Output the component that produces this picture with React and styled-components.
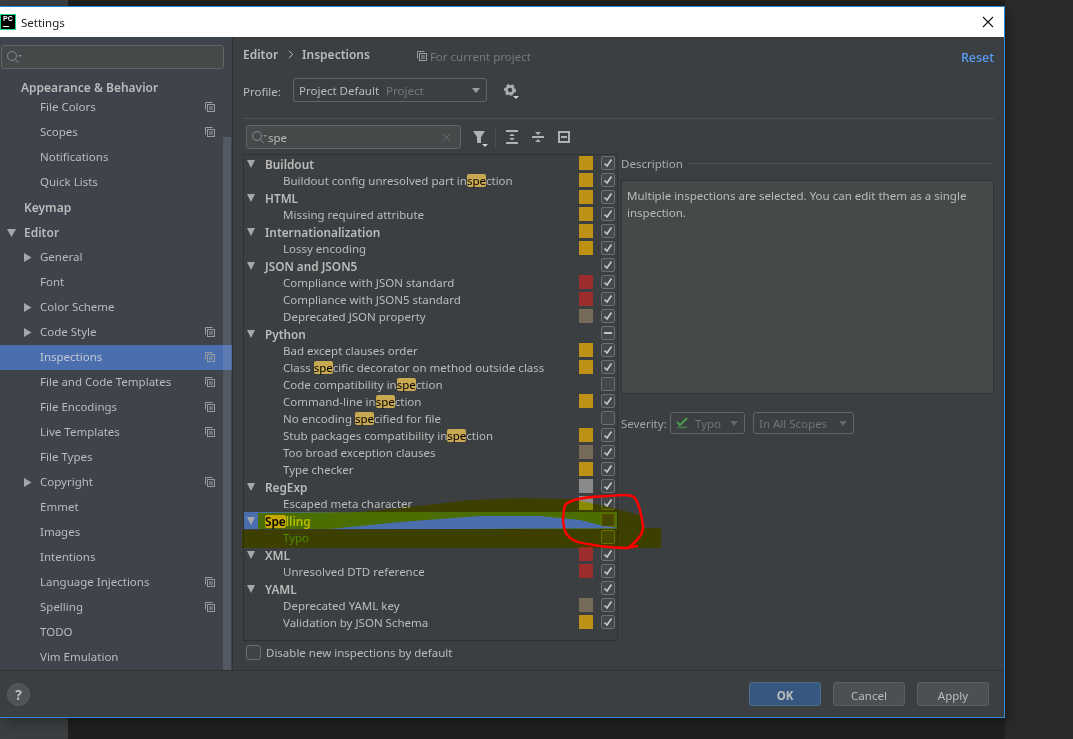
import React from 'react';
import styled, { createGlobalStyle } from 'styled-components';

const Global = createGlobalStyle`
  html, body { margin: 0; padding: 0; height: 739px; overflow: hidden; background: #2a2a2a; }
  * { box-sizing: border-box; }
  body { font-family: "Noto Sans", "Liberation Sans", sans-serif; font-size: 11.5px; color: #bbb; }
`;

const Page = styled.div`
  position: relative; width: 1073px; height: 739px; padding-top: 6px; overflow: hidden;
  background: linear-gradient(90deg, #3c3f41 0 68px, #202020 68px 1005px, #2b2b2b 1005px);
`;
const Win = styled.div`
  width: 1005px; height: 712px; display: flex; flex-direction: column;
  border-top: 1px solid #2f86d6; border-right: 1px solid #2f86d6; border-bottom: 1px solid #2f86d6;
  background: #3c3f41; box-shadow: 4px 4px 14px rgba(0,0,0,.35);
`;
const TitleBar = styled.div`
  height: 30px; flex: none; background: #fff; display: flex; align-items: center; padding: 0 8px 0 0;
  color: #222; font-size: 11.5px;
`;
const Logo = styled.div`
  width: 16px; height: 16px; margin: 0 5px 0 0; background: #000; border: 1px solid #21d789;
  color: #fff; font: 700 7px/8px "Liberation Sans", sans-serif; padding: 0 0 0 2px; position: relative;
  &::after { content: ""; position: absolute; left: 2px; bottom: 2px; width: 6px; height: 1px; background: #fff; }
`;
const TitleText = styled.span` flex: 1; `;
const Body = styled.div` flex: 1; min-height: 0; display: flex; `;
const Sidebar = styled.div`
  width: 233px; flex: none; background: #3e434c; border-right: 1px solid #323232; position: relative; overflow: hidden;
  padding-top: 8px;
`;
const SideSearch = styled.div`
  width: 223px; height: 24px; margin-left: 1px; background: #45494a; border: 1px solid #646464; border-radius: 3px;
  display: flex; align-items: center; padding-left: 4px;
`;
const SideList = styled.div` margin-top: 6px; `;
const SideRow = styled.div`
  height: ${p => (p.$short ? 20 : 25)}px; display: flex; align-items: center;
  padding-right: 17px; padding-top: ${p => (p.$short ? 4 : 0)}px;
  background: ${p => (p.$active ? '#4b6eaf' : 'transparent')};
  font-weight: ${p => (p.$bold ? 600 : 400)}; font-size: ${p => (p.$bold ? 12 : 11.5)}px;
  color: ${p => (p.$active ? '#c4cad4' : '#bbb')};
`;
const SideSlot = styled.div`
  width: ${p => p.$w}px; flex: none; display: flex; justify-content: flex-end; padding-right: 8px;
`;
const SideLabel = styled.span` flex: 1; white-space: nowrap; padding-bottom: ${p => (p.$bold ? 0 : 2)}px; `;
const Scrollbar = styled.div`
  position: absolute; left: 223px; top: 100px; width: 8px; height: 533px; background: rgba(160,170,180,.22);
`;
const Content = styled.div` flex: 1; min-width: 0; padding: 0 10px; display: flex; flex-direction: column; `;
const Header = styled.div` height: 35px; display: flex; align-items: center; `;
const Crumb = styled.span` font-weight: 600; font-size: 12px; `;
const CrumbSep = styled.span` margin: 0 8px 0 10px; display: flex; `;
const ForProject = styled.span`
  margin-left: 47px; margin-top: 4px; color: #787878; display: flex; align-items: center; gap: 3px;
`;
const Reset = styled.span` margin-left: auto; margin-top: 6px; color: #589df6; font-weight: 500; font-size: 12.5px; `;
const ProfileRow = styled.div` margin-top: 6px; height: 24px; display: flex; align-items: center; `;
const ProfileLabel = styled.span` width: 50px; flex: none; margin-top: 2px; `;
const Combo = styled.div`
  height: ${p => p.$h || 24}px; width: ${p => p.$w}px; flex: none; display: flex; align-items: center;
  border: 1px solid #646464; border-radius: 3px; padding: 0 ${p => p.$pr || 6}px 0 ${p => p.$pl || 5}px;
  color: ${p => (p.$dim ? '#707476' : '#bbb')};
`;
const ComboHint = styled.span` color: #787878; margin-left: 7px; `;
const Arrow = styled.span`
  margin-left: auto; width: 0; height: 0; border-left: 4.5px solid transparent; border-right: 4.5px solid transparent;
  border-top: 5px solid ${p => (p.$dim ? '#666' : '#9a9da0')};
`;
const GearWrap = styled.span` margin-left: 17px; margin-top: 2px; display: flex; `;
const Divider = styled.div` height: 1px; background: #515151; margin-top: 16px; `;
const Toolbar = styled.div` margin-top: 6px; height: 24px; padding-left: 3px; display: flex; align-items: center; `;
const SearchBox = styled.div`
  width: 215px; height: 24px; background: #45494a; border: 1px solid #646464; border-radius: 3px;
  display: flex; align-items: center; padding: 0 9px 0 4px; gap: 1px;
`;
const SearchText = styled.span` flex: 1; color: #bbb; margin-top: 1px; `;
const ToolIcon = styled.span` display: flex; margin-left: ${p => p.$ml}px; `;
const ToolSep = styled.span` width: 1px; height: 20px; background: #515151; margin-left: 6px; `;
const Main = styled.div` margin-top: 5px; display: flex; gap: 3px; height: 487px; `;
const Tree = styled.div` width: 375px; flex: none; border: 1px solid #2f3132; padding-right: 2px; `;
const TreeRow = styled.div`
  height: 17px; display: flex; align-items: center; padding-left: ${p => (p.$group ? 3 : 39)}px;
  background: ${p => (p.$active ? '#4b6eaf' : 'transparent')}; margin-right: ${p => (p.$active ? '-2px' : '0')};
  padding-right: ${p => (p.$active ? '2px' : '0')};
`;
const TreeCaret = styled.span`
  width: 0; height: 0; flex: none; margin-right: 10px; border-left: 4.5px solid transparent; border-right: 4.5px solid transparent;
  border-top: 8px solid #a5a8aa;
`;
const TreeLabel = styled.span`
  flex: 1; white-space: nowrap; line-height: 13px; padding-top: ${p => (p.$group ? 2 : 0)}px; font-weight: ${p => (p.$group ? 600 : 400)};
  font-size: ${p => (p.$group ? 11.8 : 11.5)}px;
  color: ${p => p.$color || '#bbb'};
`;
const Mark = styled.mark`
  display: inline-block; height: 13px; line-height: 13px; background: #c8a850; color: #000; border-radius: 2px;
`;
const Swatch = styled.span`
  width: 14px; height: 14px; flex: none; margin: -1px 8px 0 0; background: ${p => p.$c || 'transparent'};
`;
const Box = styled.span`
  width: 14px; height: 14px; flex: none; margin-top: -1px; background: #43494a; border: 1px solid #6e6e6e; border-radius: 2px;
  display: flex; align-items: center; justify-content: center;
`;
const Details = styled.div` flex: 1; min-width: 0; display: flex; flex-direction: column; `;
const DescHead = styled.div` height: 20px; padding-bottom: 2px; display: flex; align-items: center; gap: 6px; color: #a9abad; padding-right: 3px; `;
const DescLine = styled.span` flex: 1; height: 1px; background: #515151; `;
const DescBox = styled.div`
  margin-top: 6px; height: 214px; background: #45494a; border: 1px solid #323232; padding: 6px 5px;
  line-height: 17px; color: #bbb;
`;
const Severity = styled.div` margin-top: 18px; height: 22px; display: flex; align-items: center; `;
const SevLabel = styled.span` width: 49px; flex: none; color: #a2a4a6; `;
const DisableRow = styled.div` margin-top: 3px; padding-left: 3px; height: 16px; display: flex; align-items: center; gap: 5px; `;
const BigBox = styled(Box)` width: 15px; height: 15px; margin-top: 0; border-radius: 3px; background: #3f4345; `;
const Footer = styled.div`
  height: 47px; flex: none; border-top: 1px solid #323232; display: flex; align-items: center;
  padding: 0 15px 0 7px;
`;
const Help = styled.div`
  width: 23px; height: 23px; border-radius: 50%; background: #505355; border: 1px solid #5c5f61; color: #bbb;
  font-weight: 700; font-size: 14px; display: flex; align-items: center; justify-content: center; margin-right: auto;
`;
const Btn = styled.div`
  width: 72px; height: 24px; margin-left: 12px; padding-top: 2px; border-radius: 3px; display: flex; align-items: center; justify-content: center;
  background: ${p => (p.$primary ? '#365880' : '#4c5052')};
  border: 1px solid ${p => (p.$primary ? '#4c708c' : '#5e6060')};
  font-weight: ${p => (p.$primary ? 700 : 400)};
  color: #bbb;
`;
const Highlighter = styled.svg`
  position: absolute; left: 0; top: 0; pointer-events: none; mix-blend-mode: multiply;
`;
const Scribble = styled.svg` position: absolute; left: 0; top: 0; pointer-events: none; `;

const Copy = () => (
  <svg width="10" height="11" viewBox="0 0 10 11" fill="none" stroke="#9a9da0">
    <path d="M.5 7.5v-7h7" />
    <rect x="2.5" y="2.5" width="7" height="7" />
    <path d="M4 5h4M4 7h4" />
  </svg>
);
const SearchIcon = () => (
  <svg width="16" height="14" viewBox="0 0 16 14" fill="none" stroke="#8a8d8f" strokeWidth="1">
    <circle cx="6" cy="6" r="4.5" />
    <path d="M9.4 9.4L12.5 13" />
    <path d="M12 5h4l-2 2z" fill="#8a8d8f" stroke="none" />
  </svg>
);
const Tri = ({ right }) => (
  <svg width="9" height="9" viewBox="0 0 9 9">
    <path d={right ? 'M1 0l7.5 4.5L1 9z' : 'M0 1h9L4.5 9z'} fill="#a5a8aa" />
  </svg>
);
const Check = () => (
  <svg width="10" height="10" viewBox="0 0 10 10" fill="none" stroke="#c4c6c8" strokeWidth="1.7">
    <path d="M1.5 5.5L4 8l4.5-6.5" />
  </svg>
);
const Minus = () => <svg width="8" height="8" viewBox="0 0 8 8"><rect y="3" width="8" height="2" fill="#c4c6c8" /></svg>;

const side = [
  { t: 'Appearance & Behavior', i: 21, bold: true, short: true },
  { t: 'File Colors', i: 40, copy: true }, { t: 'Scopes', i: 40, copy: true },
  { t: 'Notifications', i: 40 }, { t: 'Quick Lists', i: 40 },
  { t: 'Keymap', i: 24, bold: true }, { t: 'Editor', i: 24, bold: true, caret: 'd' },
  { t: 'General', i: 40, caret: 'r' }, { t: 'Font', i: 40 },
  { t: 'Color Scheme', i: 40, caret: 'r' }, { t: 'Code Style', i: 40, caret: 'r', copy: true },
  { t: 'Inspections', i: 40, copy: true, active: true }, { t: 'File and Code Templates', i: 40, copy: true },
  { t: 'File Encodings', i: 40, copy: true }, { t: 'Live Templates', i: 40, copy: true },
  { t: 'File Types', i: 40 }, { t: 'Copyright', i: 40, caret: 'r', copy: true },
  { t: 'Emmet', i: 40 }, { t: 'Images', i: 40 }, { t: 'Intentions', i: 40 },
  { t: 'Language Injections', i: 40, copy: true }, { t: 'Spelling', i: 40, copy: true },
  { t: 'TODO', i: 40 }, { t: 'Vim Emulation', i: 40 },
];

const G = '#bd9214', R = '#9c2d2d', W = '#756b58', A = '#8a8a8a';
const tree = [
  { t: 'Buildout', g: 1, c: G, k: 1 },
  { t: 'Buildout config unresolved part in|spe|ction', c: G, k: 1 },
  { t: 'HTML', g: 1, c: G, k: 1 }, { t: 'Missing required attribute', c: G, k: 1 },
  { t: 'Internationalization', g: 1, c: G, k: 1 }, { t: 'Lossy encoding', c: G, k: 1 },
  { t: 'JSON and JSON5', g: 1, k: 1 }, { t: 'Compliance with JSON standard', c: R, k: 1 },
  { t: 'Compliance with JSON5 standard', c: R, k: 1 }, { t: 'Deprecated JSON property', c: W, k: 1 },
  { t: 'Python', g: 1, k: 2 }, { t: 'Bad except clauses order', c: G, k: 1 },
  { t: 'Class |spe|cific decorator on method outside class', c: G, k: 1 },
  { t: 'Code compatibility in|spe|ction', k: 0 }, { t: 'Command-line in|spe|ction', c: G, k: 1 },
  { t: 'No encoding |spe|cified for file', k: 0 },
  { t: 'Stub packages compatibility in|spe|ction', c: G, k: 1 },
  { t: 'Too broad exception clauses', c: W, k: 1 }, { t: 'Type checker', c: G, k: 1 },
  { t: 'RegExp', g: 1, c: A, k: 1 }, { t: 'Escaped meta character', c: A, k: 1 },
  { t: '|Spe|lling', g: 1, k: 0, active: true }, { t: 'Typo', k: 0, color: '#4b8b0a' },
  { t: 'XML', g: 1, c: R, k: 1 }, { t: 'Unresolved DTD reference', c: R, k: 1 },
  { t: 'YAML', g: 1, k: 1 }, { t: 'Deprecated YAML key', c: W, k: 1 },
  { t: 'Validation by JSON Schema', c: G, k: 1 },
];

const Marked = ({ text }) => text.split('|').map((s, i) => (i % 2 ? <Mark key={i}>{s}</Mark> : <span key={i}>{s}</span>));

export default function App() {
  return (
    <Page>
      <Global />
      <Win>
        <TitleBar>
          <Logo>PC</Logo>
          <TitleText>Settings</TitleText>
          <svg width="12" height="12" viewBox="0 0 12 12" stroke="#111" strokeWidth="1.1" style={{ marginRight: 2 }}>
            <path d="M1 1l10 10M11 1L1 11" />
          </svg>
        </TitleBar>
        <Body>
          <Sidebar>
            <SideSearch><SearchIcon /></SideSearch>
            <SideList>
              {side.map(r => (
                <SideRow key={r.t} $bold={r.bold} $short={r.short} $active={r.active}>
                  <SideSlot $w={r.i}>{r.caret && <Tri right={r.caret === 'r'} />}</SideSlot>
                  <SideLabel $bold={r.bold}>{r.t}</SideLabel>
                  {r.copy && <Copy />}
                </SideRow>
              ))}
            </SideList>
            <Scrollbar />
          </Sidebar>
          <Content>
            <Header>
              <Crumb>Editor</Crumb>
              <CrumbSep>
                <svg width="6" height="9" viewBox="0 0 6 9" fill="none" stroke="#bbb"><path d="M1 .8l3.6 3.7L1 8.2" /></svg>
              </CrumbSep>
              <Crumb>Inspections</Crumb>
              <ForProject><Copy />For current project</ForProject>
              <Reset>Reset</Reset>
            </Header>
            <ProfileRow>
              <ProfileLabel>Profile:</ProfileLabel>
              <Combo $w={194}>Project Default<ComboHint>Project</ComboHint><Arrow /></Combo>
              <GearWrap>
                <svg width="16" height="15" viewBox="0 0 16 15" fill="none">
                  <circle cx="6" cy="6" r="3.6" stroke="#afb1b3" strokeWidth="2.6" />
                  <circle cx="6" cy="6" r="5.300" stroke="#afb1b3" strokeWidth="1.400" strokeDasharray="2.600 2.600" />
                  <path d="M9 12h6l-3 3z" fill="#d0d2d4" />
                </svg>
              </GearWrap>
            </ProfileRow>
            <Divider />
            <Toolbar>
              <SearchBox>
                <SearchIcon />
                <SearchText>spe</SearchText>
                <svg width="9" height="9" viewBox="0 0 9 9" stroke="#6b6e70"><path d="M.5.500l8 8M8.500.500l-8 8" /></svg>
              </SearchBox>
              <ToolIcon $ml={12}>
                <svg width="16" height="16" viewBox="0 0 16 16" style={{ marginTop: 3 }}>
                  <path d="M0 0h12L8 6v6H4V6z" fill="#afb1b3" />
                  <path d="M9 13h6l-3 3z" fill="#d0d2d4" />
                </svg>
              </ToolIcon>
              <ToolSep />
              <ToolIcon $ml={10}>
                <svg width="12" height="14" viewBox="0 0 12 14" fill="#afb1b3">
                  <rect width="12" height="2" /><rect y="12" width="12" height="2" />
                  <path d="M6 3.500l3 2.500H3zM6 10.500L9 8H3z" />
                </svg>
              </ToolIcon>
              <ToolIcon $ml={14}>
                <svg width="12" height="12" viewBox="0 0 12 12" fill="#afb1b3">
                  <rect y="5" width="12" height="2" /><path d="M6 4L3 1h6zM6 8l3 3H3z" />
                </svg>
              </ToolIcon>
              <ToolIcon $ml={14}>
                <svg width="12" height="12" viewBox="0 0 12 12" fill="none" stroke="#afb1b3" strokeWidth="2">
                  <rect x="1" y="1" width="10" height="10" /><path d="M3 6h6" />
                </svg>
              </ToolIcon>
            </Toolbar>
            <Main>
              <Tree>
                {tree.map((r, i) => (
                  <TreeRow key={i} $group={r.g} $active={r.active}>
                    {r.g && <TreeCaret />}
                    <TreeLabel $group={r.g} $color={r.color}><Marked text={r.t} /></TreeLabel>
                    <Swatch $c={r.c} />
                    <Box>{r.k === 1 && <Check />}{r.k === 2 && <Minus />}</Box>
                  </TreeRow>
                ))}
              </Tree>
              <Details>
                <DescHead>Description<DescLine /></DescHead>
                <DescBox>Multiple inspections are selected. You can edit them as a single inspection.</DescBox>
                <Severity>
                  <SevLabel>Severity:</SevLabel>
                  <Combo $w={75} $h={22} $dim>
                    <svg width="14" height="12" viewBox="0 0 14 12" fill="none" style={{ marginRight: 5 }}>
                      <path d="M1 5l3 3 7-7" stroke="#4c9a4c" strokeWidth="2" />
                      <path d="M1 11l2-1.500 2 1.500 2-1.500 2 1.500 2-1.500" stroke="#4c9a4c" />
                    </svg>
                    Typo<Arrow $dim />
                  </Combo>
                  <Combo $w={101} $h={22} $dim style={{ marginLeft: 8 }}>In All Scopes<Arrow $dim /></Combo>
                </Severity>
              </Details>
            </Main>
            <DisableRow><BigBox />Disable new inspections by default</DisableRow>
          </Content>
        </Body>
        <Footer>
          <Help>?</Help>
          <Btn $primary>OK</Btn>
          <Btn>Cancel</Btn>
          <Btn>Apply</Btn>
        </Footer>
      </Win>
      <Highlighter width="1073" height="739" viewBox="0 0 1073 739">
        <path fill="#ffff00" d="M258 513L360 512L410 507L470 500L520 498L570 499L600 505L640 515L643 528L618 528L600 525L580 520L540 516L480 516L400 522L330 529L258 529Z" />
        <path fill="#ffff00" d="M242 530L661 528L661 548L242 548Z" />
      </Highlighter>
      <Scribble width="1073" height="739" viewBox="0 0 1073 739">
        <path fill="none" stroke="#f00" strokeWidth="2.500" strokeLinecap="round" strokeLinejoin="round"
          d="M565 505C570 499 585 497 607 496C622 495 632 494 635 498C640 506 642 518 643 527C643 533 640 537 636 541C632 545 629 548 627 548C618 548 608 547 600 546C588 544 577 543 573 540C567 536 565 532 565 530C563 525 563 520 563 517C564 511 564 508 565 505ZM627 548C631 547 634 547 637 546" />
      </Scribble>
    </Page>
  );
}
